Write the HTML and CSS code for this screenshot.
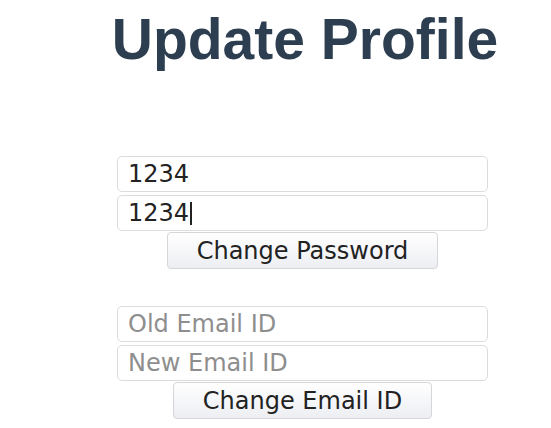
FILE: index.html
```html
<!DOCTYPE html>
<html lang="en">
<head>
<meta charset="utf-8">
<title>Update Profile</title>
<link rel="stylesheet" href="styles.css">
</head>
<body>
<main class="page">
  <h1 class="title">Update Profile</h1>
  <form class="group group-password">
    <input class="field" type="text" value="1234">
    <div class="field-wrap">
      <input class="field" type="text" value="1234">
      <span class="caret"></span>
    </div>
    <button class="btn btn-password" type="button">Change Password</button>
  </form>
  <form class="group group-email">
    <input class="field" type="text" placeholder="Old Email ID">
    <input class="field" type="text" placeholder="New Email ID">
    <button class="btn btn-email" type="button">Change Email ID</button>
  </form>
</main>
</body>
</html>
```
FILE: styles.css
```css
html, body {
  margin: 0;
  padding: 0;
  background: #ffffff;
}

.page {
  display: flex;
  flex-direction: column;
  align-items: center;
  padding-left: 54px;
}

.title {
  margin: 6px 0 0 5px;
  font-family: "Liberation Sans", Arial, sans-serif;
  font-weight: bold;
  font-size: 57px;
  line-height: 66px;
  color: #2c3e50;
}

.group {
  display: flex;
  flex-direction: column;
  align-items: center;
  gap: 3px;
  margin: 0;
}

.group-password {
  margin-top: 84px;
}

.group-email {
  margin-top: 37px;
}

.field-wrap {
  position: relative;
}

.field {
  box-sizing: border-box;
  width: 371px;
  height: 36px;
  margin: 0;
  padding: 0 10px;
  border: 1px solid #dcdcdc;
  border-radius: 5px;
  background: #ffffff;
  font-family: "DejaVu Sans", sans-serif;
  font-size: 24px;
  color: #222222;
  outline: none;
}

.field::placeholder {
  color: #8e8e8e;
}

.caret {
  position: absolute;
  left: 73px;
  top: 7px;
  width: 2px;
  height: 23px;
  background: #222222;
}

.btn {
  box-sizing: border-box;
  height: 37px;
  margin-top: -2px;
  padding: 0 29px;
  border: 1px solid #d4d6da;
  border-radius: 4px;
  background: linear-gradient(#ffffff, #eceef2);
  font-family: "DejaVu Sans", sans-serif;
  font-size: 24px;
  color: #222222;
  line-height: 1;
}
```
